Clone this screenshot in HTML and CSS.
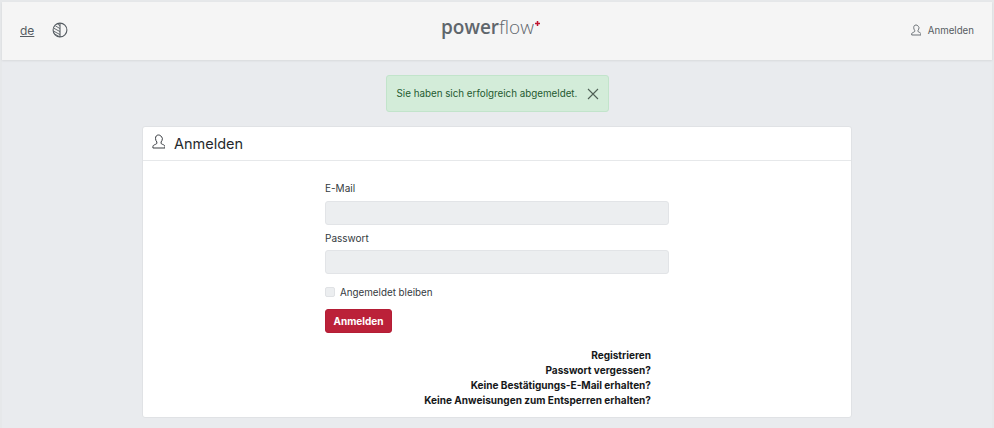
FILE: index.html
```html
<!DOCTYPE html>
<html lang="de">
<head>
<meta charset="utf-8">
<title>powerflow</title>
<link rel="stylesheet" href="styles.css">
</head>
<body>
<div class="frame">
  <header class="navbar">
    <div class="nav-left">
      <a class="lang" href="#">de</a>
      <svg class="theme-icon" viewBox="0 0 16 16" width="16" height="16" fill="none" stroke="#555c62" stroke-width="1.1">
        <circle cx="8" cy="8" r="6.9"/>
        <path d="M8 1v14"/>
        <path d="M5.6 2.1 8 3.6M3.4 3.900 8 6.6M2 6.300 8 9.6M1.600 9.100 8 12.600M3 12.200 7.600 14.800" stroke-width=".9"/>
      </svg>
    </div>
    <div class="logo"><span class="logo-strong">power</span><span class="logo-light">flow</span><svg class="logo-plus" viewBox="0 0 6 6" width="5" height="5"><path d="M2.100 0h1.800v2.100H6v1.800H3.900V6H2.100V3.900H0V2.100h2.100z" fill="#c0152f"/></svg></div>
    <a class="nav-user" href="#">
      <svg class="user-icon" viewBox="0 0 14 16" width="10" height="12" fill="none" stroke="#555c62" stroke-width="1.200"><path d="M7 1C4.900 1 3.800 2.500 3.800 4.600c0 1.700.6 3 1.400 3.900v1.300c0 .6-.5.9-1.500 1.300-1.300.5-2.700 1-2.700 2.400V15h13v-1.500c0-1.400-1.400-1.900-2.700-2.400-1-.4-1.500-.7-1.500-1.300V8.500c.8-.9 1.400-2.200 1.400-3.900C10.200 2.500 9.100 1 7 1z"/></svg>
      <span>Anmelden</span>
    </a>
  </header>
  <main class="content">
    <div class="alert">
      <span>Sie haben sich erfolgreich abgemeldet.</span>
      <svg class="alert-close" viewBox="0 0 12 12" width="12" height="12" stroke="#4f5f55" stroke-width="1.100" fill="none"><path d="M1 1l10 10M11 1 1 11"/></svg>
    </div>
    <section class="card">
      <div class="card-header">
        <svg class="card-icon" viewBox="0 0 14 16" width="13" height="15" fill="none" stroke="#33383d" stroke-width="1.050"><path d="M7 1C4.900 1 3.800 2.500 3.800 4.600c0 1.700.6 3 1.400 3.900v1.300c0 .6-.5.9-1.500 1.300-1.300.5-2.700 1-2.700 2.400V15h13v-1.500c0-1.400-1.400-1.900-2.700-2.400-1-.4-1.500-.7-1.500-1.300V8.500c.8-.9 1.400-2.200 1.400-3.900C10.200 2.500 9.100 1 7 1z"/></svg>
        <h1 class="card-title">Anmelden</h1>
      </div>
      <div class="card-body">
        <form class="login-form">
          <label class="field-label" for="email">E-Mail</label>
          <input class="field-input" id="email" type="text" disabled>
          <label class="field-label" for="pw">Passwort</label>
          <input class="field-input" id="pw" type="password" disabled>
          <div class="check-row">
            <span class="check-box"></span>
            <span class="check-label">Angemeldet bleiben</span>
          </div>
          <button class="btn" type="button">Anmelden</button>
          <nav class="links">
            <a href="#">Registrieren</a>
            <a href="#">Passwort vergessen?</a>
            <a href="#">Keine Bestätigungs-E-Mail erhalten?</a>
            <a href="#">Keine Anweisungen zum Entsperren erhalten?</a>
          </nav>
        </form>
      </div>
    </section>
  </main>
</div>
</body>
</html>
```
FILE: styles.css
```css
* { box-sizing: border-box; }
html, body { margin: 0; height: 100%; }
body {
  background: #e6e8ea;
  font-family: Inter, "Liberation Sans", sans-serif;
  color: #343a40;
  font-size: 9.800px;
  overflow: hidden;
}
a { color: inherit; text-decoration: none; }
.frame {
  width: 990px;
  height: 426px;
  margin-top: 2px;
  margin-left: 2px;
  background: #e9ebee;
  display: flex;
  flex-direction: column;
}
.navbar {
  height: 58px;
  flex: none;
  background: #f5f5f5;
  box-shadow: 0 1px 2px rgba(0,0,0,.08);
  display: flex;
  align-items: center;
  justify-content: space-between;
  padding: 0 18px 2px 18px;
  position: relative;
}
.nav-left { display: flex; align-items: center; gap: 18px; }
.lang { font-size: 12px; color: #555c62; text-decoration: underline; }
.theme-icon { display: block; }
.logo {
  position: absolute;
  left: 439px;
  top: 12px;
  font-family: "Open Sans", sans-serif;
  font-size: 19px;
  line-height: 27px;
  color: #5f666c;
  display: flex;
}
.logo-strong { font-weight: 600; }
.logo-light { font-weight: 300; }
.logo-plus { margin: 7px 0 0 1px; }
.nav-user { display: flex; align-items: center; gap: 7px; color: #555c62; font-size: 9.700px; }
.user-icon { display: block; margin-top: -1px; }
.content {
  flex: 1;
  display: flex;
  flex-direction: column;
  align-items: center;
  padding-top: 15px;
}
.alert {
  width: 223px;
  height: 37px;
  background: #d3ecd9;
  border: 1px solid #c2e4cb;
  border-radius: 3px;
  color: #1f5a30;
  display: flex;
  align-items: center;
  justify-content: space-between;
  padding: 0 9px 0 10px;
}
.card {
  width: 710px;
  margin-top: 14px;
  height: 292px;
  background: #fff;
  border: 1px solid #e0e2e5;
  border-radius: 3px;
  display: flex;
  flex-direction: column;
}
.card-header {
  height: 34px;
  flex: none;
  border-bottom: 1px solid #e6e8ea;
  display: flex;
  align-items: center;
  gap: 9px;
  padding: 0 0 0 9px;
}
.card-icon { display: block; margin-top: -4px; }
.card-title { margin: 0; font-size: 14.500px; font-weight: 400; color: #25292d; }
.card-body { display: flex; justify-content: center; }
.login-form { width: 344px; display: flex; flex-direction: column; padding-top: 20px; }
.field-label { font-size: 10px; line-height: 14px; margin-bottom: 5px; }
.field-label:first-child { margin-bottom: 6px; }
.field-input {
  height: 24px;
  background: #eceef0;
  border: 1px solid #e2e4e7;
  border-radius: 3px;
  margin: 0 0 6px;
  padding: 0;
}
.check-row { display: flex; align-items: center; gap: 5px; height: 24px; }
.check-box { width: 10px; height: 10px; background: #eceef0; border: 1px solid #e0e2e5; border-radius: 2px; }
.btn {
  width: 67px;
  height: 24px;
  margin-top: 5px;
  background: #bb2139;
  border: 1px solid #b41d35;
  border-radius: 3px;
  color: #fff;
  font: 700 10px Inter, "Liberation Sans", sans-serif;
  padding: 0;
}
.links {
  display: flex;
  flex-direction: column;
  align-items: flex-end;
  padding-right: 18px;
  margin-top: 15px;
  font-size: 10.050px;
  font-weight: 700;
  color: #16181a;
  line-height: 15px;
}
```
